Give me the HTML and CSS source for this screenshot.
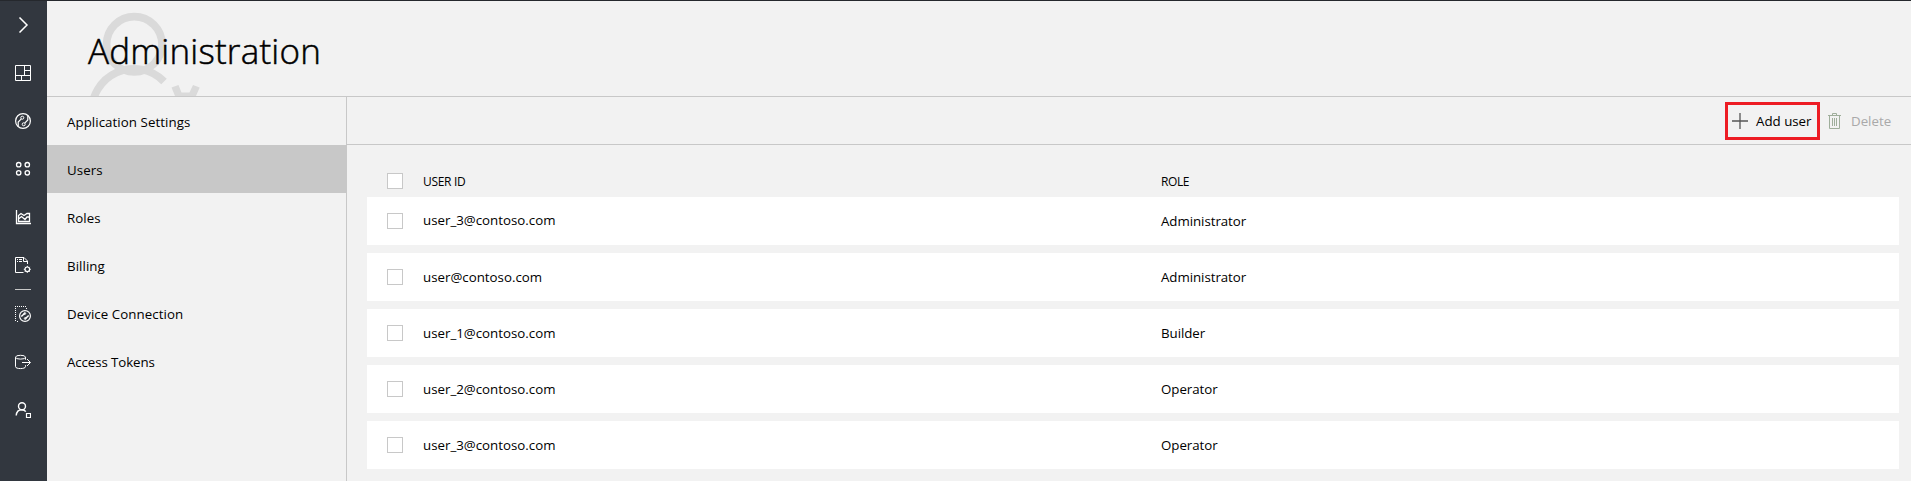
FILE: index.html
```html
<!DOCTYPE html>
<html lang="en">
<head>
<meta charset="utf-8">
<title>Administration</title>
<link rel="stylesheet" href="styles.css">
</head>
<body>
<div class="app">
  <nav class="rail">
    <a class="rail-item"><svg class="icon" viewBox="0 0 16 16"><path d="M4.500.5 12 8l-7.500 7.500" stroke-width="1.500"/></svg></a>
    <a class="rail-item"><svg class="icon" viewBox="0 0 16 16"><path d="M.5.5h15v15H.5zM9.500.5v10M9.500 5.500h6M.5 10.500h15M6.500 10.500v5"/></svg></a>
    <a class="rail-item"><svg class="icon" viewBox="0 0 16 16"><circle cx="8" cy="8" r="7.400" stroke-width="1.200"/><circle cx="7.300" cy="4.700" r="1.500"/><circle cx="8.700" cy="11.300" r="1.500"/><path d="M6.300 5.900 3.200 9v4.300M9.700 10.100 12.800 7V2.700" stroke-width="1.200"/></svg></a>
    <a class="rail-item"><svg class="icon" viewBox="0 0 16 16"><g stroke-width="1.300"><circle cx="3.700" cy="3.700" r="2.200"/><circle cx="12.300" cy="3.700" r="2.200"/><circle cx="3.700" cy="11.800" r="2.200"/><circle cx="12.300" cy="11.800" r="2.200"/></g></svg></a>
    <a class="rail-item"><svg class="icon" viewBox="0 0 16 16"><path d="M1.500 1v13.500H16" stroke-width="1.300"/><path d="M3.500 12.500v-6L6 4.500l3 2 3-2h2.500v8zM3.500 10l3-2.500 3.500 3 2-2.500h2.500" stroke-width="1.300"/></svg></a>
    <a class="rail-item"><svg class="icon" viewBox="0 0 16 16"><path d="M8.500 15.500h-8V.5h8.500l3.500 3.500v3M8.500.5v4h4M2 2.500h1M4 2.500h3M2 4.500h1M4 4.500h3"/><circle cx="12.300" cy="12.300" r="2.300" stroke-width="1.200"/><path d="M12.300 8.800v1.300M12.300 14.500v1.300M8.800 12.300h1.300M14.500 12.300h1.300M9.900 9.900l.8.8M13.900 13.900l.8.8M14.700 9.900l-.8.8M10.700 13.900l-.8.8"/></svg></a>
    <div class="rail-divider"></div>
    <a class="rail-item"><svg class="icon" viewBox="0 0 16 16"><path d="M0 .5h12M.5 2v14M2 15.500h2M11.500 2v1" stroke-dasharray="1 1"/><circle cx="10" cy="10" r="5.400" stroke-width="1.200"/><path d="M9.800 7.200 6.300 10.500M10.200 12.800l3.500-3.300" stroke-width="1.500"/><circle cx="9.800" cy="7.500" r=".9"/><circle cx="10.200" cy="12.500" r=".9"/></svg></a>
    <a class="rail-item"><svg class="icon" viewBox="0 0 16 16"><ellipse cx="5.500" cy="3.200" rx="5" ry="1.900"/><path d="M.5 3.200v9.500c0 2.500 10 2.500 10 0v-1.500M10.500 3.200v2.500"/><path d="M7 8.500h8M12 5l3.500 3.500L12 12"/></svg></a>
    <a class="rail-item"><svg class="icon" viewBox="0 0 16 16"><circle cx="7" cy="4.200" r="3.500" stroke-width="1.400"/><path d="M1.200 13.500C1.500 9.500 4 7.700 7 7.700c1.700 0 3 .8 3.800 2" stroke-width="1.400"/><path d="M11.500 11.500h4v4h-4z" stroke-width="1.200"/></svg></a>
  </nav>
  <main class="main">
    <header class="header">
      <svg class="emblem" viewBox="0 0 130 95"><circle cx="47.300" cy="43.300" r="27.700"/><path d="M5 113a42 42 0 0 1 72-32.500"/><path class="gear" d="M84.500 86.500l7-2.500 3 7.500h8l3.500-7.500 6.700 2.500-3.700 8.500H88z"/></svg>
      <h1 class="title">Administration</h1>
    </header>
    <div class="body">
      <nav class="menu">
        <a class="menu-item">Application Settings</a>
        <a class="menu-item selected">Users</a>
        <a class="menu-item">Roles</a>
        <a class="menu-item">Billing</a>
        <a class="menu-item">Device Connection</a>
        <a class="menu-item tokens">Access Tokens</a>
      </nav>
      <section class="content">
        <div class="toolbar">
          <button class="command highlighted"><svg class="icon plus" viewBox="0 0 16 16"><path d="M8 0v16M0 8h16"/></svg><span>Add user</span></button>
          <button class="command disabled"><svg class="icon trash" viewBox="0 0 13 16"><path d="M0 2.500h13M4.500 2.500v-2h4v2M1.500 2.500v13h10v-13M4.500 5v8M6.500 5v8M8.500 5v8"/></svg><span>Delete</span></button>
        </div>
        <div class="table">
          <div class="row head"><i class="check"></i><span class="user">USER ID</span><span class="role">ROLE</span></div>
          <div class="row"><i class="check"></i><span class="user raised">user_3@contoso.com</span><span class="role">Administrator</span></div>
          <div class="row"><i class="check"></i><span class="user">user@contoso.com</span><span class="role">Administrator</span></div>
          <div class="row"><i class="check"></i><span class="user">user_1@contoso.com</span><span class="role">Builder</span></div>
          <div class="row"><i class="check"></i><span class="user">user_2@contoso.com</span><span class="role">Operator</span></div>
          <div class="row"><i class="check"></i><span class="user">user_3@contoso.com</span><span class="role">Operator</span></div>
        </div>
      </section>
    </div>
  </main>
</div>
</body>
</html>
```
FILE: styles.css
```css
* { box-sizing: border-box; }
body {
  margin: 0;
  background: #f2f2f2;
  color: #000;
  font: 13.3px/20px "Open Sans", "Noto Sans", sans-serif;
  overflow: hidden;
}
.app { display: flex; height: 481px; border-top: 1px solid #25282d; }
.icon { width: 16px; height: 16px; fill: none; stroke: #fff; stroke-width: 1; flex: none; }

.rail { width: 47px; flex: none; background: #32373f; }
.rail-item { display: flex; height: 48px; align-items: center; padding-left: 15px; }
.rail-divider { width: 16px; height: 1px; margin-left: 15px; background: #c8c8c8; }

.main { flex: 1; display: flex; flex-direction: column; min-width: 0; }
.header { position: relative; height: 96px; padding: 26px 0 0 41px; border-bottom: 1px solid #c8c8c8; }
.emblem { position: absolute; left: 40px; top: 0; width: 130px; height: 95px; fill: none; stroke: #dadada; stroke-width: 7.700; overflow: hidden; }
.emblem .gear { fill: #dadada; stroke: none; }
.title { position: relative; margin: 0; font-size: 35px; line-height: 48px; font-weight: 300; letter-spacing: 0.2px; -webkit-text-stroke: 0.5px #000; white-space: nowrap; }

.body { flex: 1; display: flex; min-height: 0; }
.menu { width: 300px; flex: none; border-right: 1px solid #c8c8c8; }
.menu-item { display: flex; height: 48px; align-items: center; padding: 2px 0 0 20px; letter-spacing: 0.06px; }
.tokens { letter-spacing: -0.1px; }
.selected { background: #c8c8c8; }

.content { flex: 1; min-width: 0; }
.toolbar { display: flex; justify-content: flex-end; height: 48px; padding: 5px 20px 0 0; border-bottom: 1px solid #c8c8c8; }
.command { display: flex; align-items: center; height: 38px; padding: 0; border: 0; background: none; color: #000; font: inherit; text-align: left; white-space: nowrap; }
.highlighted { width: 95px; padding-left: 4px; border: 3px solid #ed1c24; gap: 8px; }
.disabled { width: 71px; padding-left: 8px; gap: 10px; color: #a9a9a9; }
.plus { stroke: #555; stroke-width: 1.300; }
.trash { width: 13px; stroke: #9fae9b; }

.table { padding: 20px 12px 0 20px; }
.row { display: flex; align-items: center; height: 48px; margin-bottom: 8px; padding-left: 20px; background: #fff; }
.head { height: 32px; margin-bottom: 0; background: none; font-size: 12px; letter-spacing: -0.3px; }
.head span { padding-top: 1px; }
.head .role { letter-spacing: -0.4px; }
.raised { padding-bottom: 2px; }
.check { width: 16px; height: 16px; flex: none; border: 1px solid #c8c8c8; background: #fff; }
.user { width: 738px; margin-left: 20px; }
.role { letter-spacing: -0.05px; }
```
